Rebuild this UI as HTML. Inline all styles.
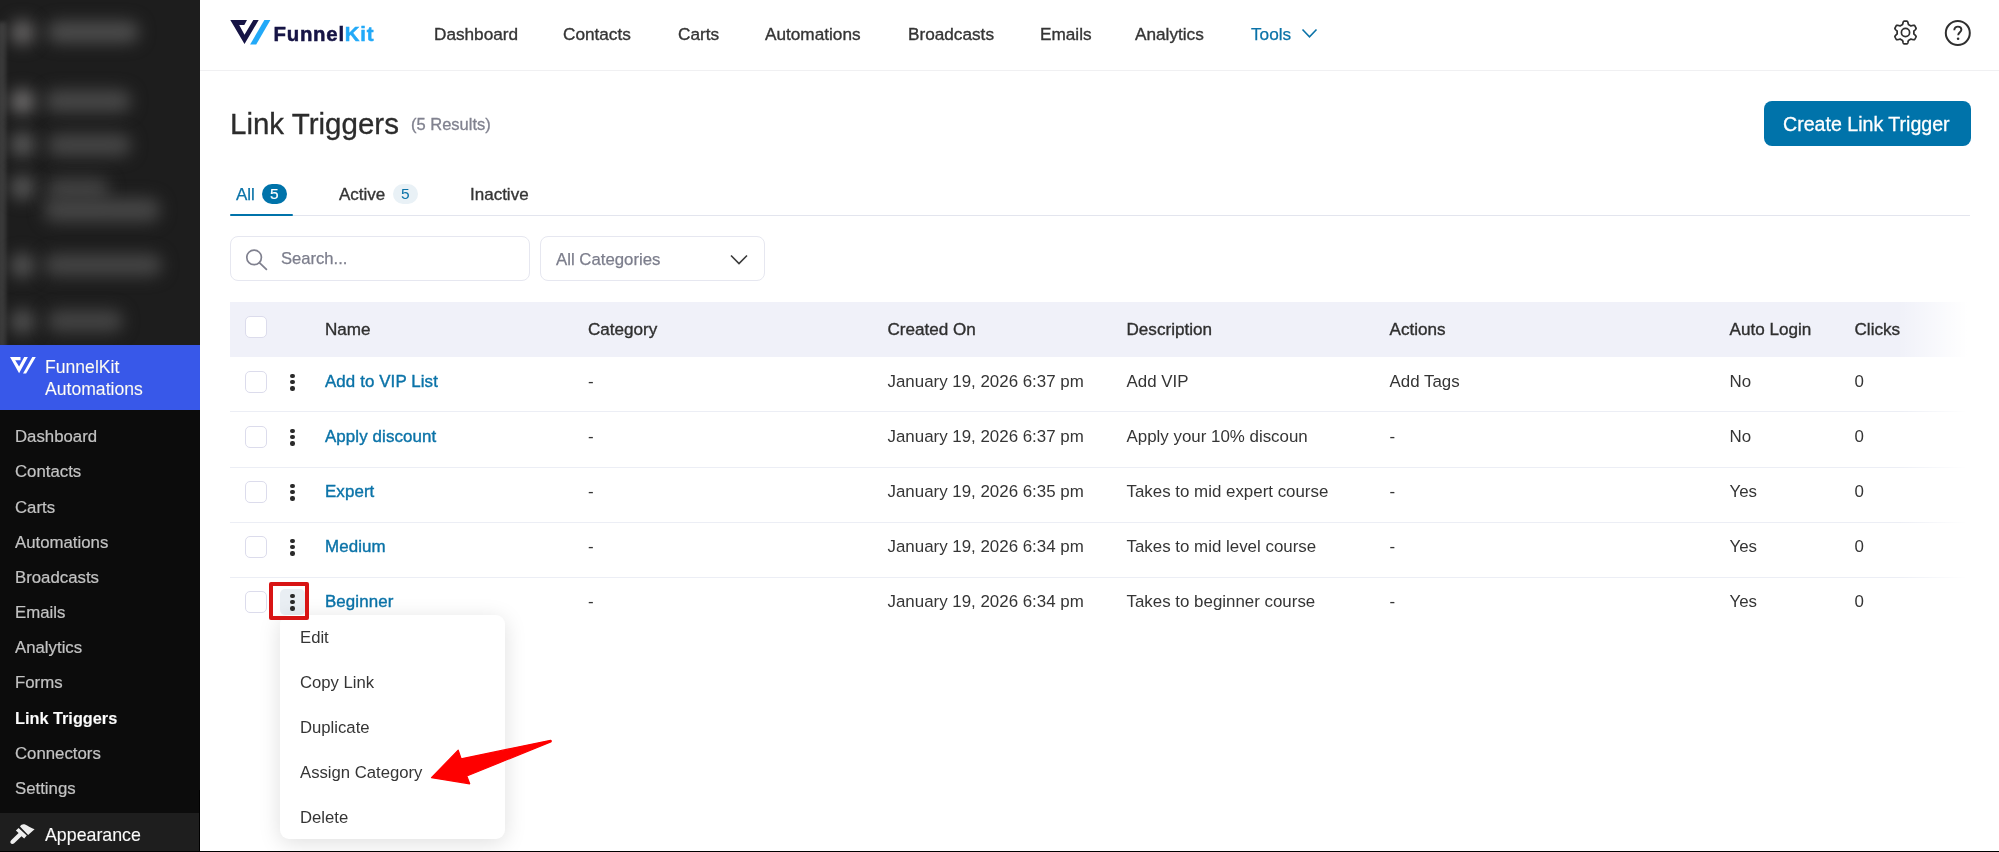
<!DOCTYPE html>
<html><head><meta charset="utf-8">
<style>
*{box-sizing:border-box;margin:0;padding:0}
html,body{width:1999px;height:852px;overflow:hidden;background:#fff}
body{position:relative;font-family:"Liberation Sans",sans-serif;color:#353535}
.a{position:absolute;white-space:nowrap;line-height:1}
#sb{position:absolute;left:0;top:0;width:200px;height:852px;background:#1d1d1d;overflow:hidden}
.blob{position:absolute;background:#555;filter:blur(8px);border-radius:10px}
.sm{position:absolute;left:15px;font-size:16.8px;color:#c3c3c3;line-height:1;-webkit-text-stroke:0.2px #c3c3c3}
.nav{font-size:17.2px;color:#353535;-webkit-text-stroke:0.35px #353535}
.th{font-size:17.1px;color:#2f2f2f;-webkit-text-stroke:0.35px #2f2f2f}
.td{font-size:16.9px;color:#353535}
.lk{font-size:16.9px;letter-spacing:0.1px;color:#0b73a8;-webkit-text-stroke:0.4px #0b73a8}
.cb{position:absolute;left:245px;width:22px;height:22px;border:1.8px solid #dcdcec;border-radius:5px;background:#fff}
.dots{position:absolute;left:290.2px;width:5px}
.dots i{display:block;width:4.4px;height:4.4px;border-radius:50%;background:#2a2a2a;margin-bottom:2px}
.rl{position:absolute;left:230px;width:1740px;height:1px;background:#eceef5}
.mi{font-size:16.7px;color:#353535}
</style></head><body>
<div id="root" style="position:absolute;left:0;top:0;width:1999px;height:852px;will-change:transform;background:#fff">
<div id="sb">
  <div class="blob" style="left:-3px;top:22px;width:9px;height:330px;background:#3a3a3a;filter:blur(2px);border-radius:0"></div>
  <div class="blob" style="left:10px;top:20px;width:25px;height:25px;border-radius:50%;background:#646262"></div>
  <div class="blob" style="left:47px;top:21px;width:92px;height:22px;background:#4c4c4c"></div>
  <div class="blob" style="left:10px;top:89px;width:25px;height:25px;border-radius:50%;background:#6e6c6c"></div>
  <div class="blob" style="left:45px;top:90px;width:86px;height:22px;background:#484848"></div>
  <div class="blob" style="left:10px;top:132px;width:25px;height:25px;border-radius:50%;background:#575757"></div>
  <div class="blob" style="left:47px;top:134px;width:84px;height:22px;background:#464646"></div>
  <div class="blob" style="left:10px;top:175px;width:25px;height:25px;border-radius:50%;background:#555"></div>
  <div class="blob" style="left:47px;top:178px;width:62px;height:22px;background:#424242"></div>
  <div class="blob" style="left:44px;top:198px;width:116px;height:24px;background:#454545"></div>
  <div class="blob" style="left:10px;top:253px;width:25px;height:25px;border-radius:50%;background:#525252"></div>
  <div class="blob" style="left:44px;top:254px;width:118px;height:22px;background:#454545"></div>
  <div class="blob" style="left:10px;top:309px;width:25px;height:25px;border-radius:50%;background:#505050"></div>
  <div class="blob" style="left:47px;top:310px;width:76px;height:22px;background:#444"></div>
<div style="position:absolute;left:0;top:345px;width:200px;height:65px;background:#3858e9"></div>
  <svg style="position:absolute;left:10px;top:357px" width="28" height="18" viewBox="0 0 28 18">
    <path d="M0,0 H10.5 V3.2 H5.2 L9.1,9.5 L14.2,0 H17.9 L9.1,16.2 Z" fill="#fff"/>
    <path d="M22.3,0 H25.8 L16.1,16.5 H13 Z" fill="#fff"/>
  </svg>
  <div class="sm" style="top:359.1px;left:45px;color:#fff;font-size:17.6px">FunnelKit</div>
  <div class="sm" style="top:380.6px;left:45px;color:#fff;font-size:17.6px">Automations</div>
  <div style="position:absolute;left:0;top:410px;width:200px;height:403px;background:#0c0c0c"></div>
  <div class="sm" style="top:428.6px">Dashboard</div>
  <div class="sm" style="top:463.6px">Contacts</div>
  <div class="sm" style="top:499.6px">Carts</div>
  <div class="sm" style="top:535.1px">Automations</div>
  <div class="sm" style="top:570.1px">Broadcasts</div>
  <div class="sm" style="top:605.1px">Emails</div>
  <div class="sm" style="top:640.1px">Analytics</div>
  <div class="sm" style="top:675.1px">Forms</div>
  <div class="sm" style="top:709.8px;color:#fff;font-weight:bold;font-size:16.3px">Link Triggers</div>
  <div class="sm" style="top:745.6px">Connectors</div>
  <div class="sm" style="top:780.6px">Settings</div>
  <div style="position:absolute;left:0;top:813px;width:200px;height:39px;background:#1e1e1e"></div>
  <svg style="position:absolute;left:0;top:813px" width="40" height="39" viewBox="0 813 40 39">
    <path d="M20,826.6 C21,824.8 22.5,824 24.2,824.3 C26.5,824.8 29.5,827.5 34.6,829.2 L28.1,834.9 Z" fill="#eee"/>
    <path d="M15.9,830.4 L18.6,827.9 L26.8,835.6 L24.2,838.4 L21.5,836.2 L14.2,843.2 C13,844.3 11.3,844.2 10.6,843.1 C10,842.1 10.5,840.9 11.4,840.1 L18.6,833.1 Z" fill="#eee"/>
  </svg>
  <div class="sm" style="top:827.1px;left:45px;color:#fff;font-size:17.8px">Appearance</div>
</div>
<!-- header -->
<div style="position:absolute;left:200px;top:70px;width:1799px;height:1px;background:#f0f0f2"></div>
<svg style="position:absolute;left:229px;top:19px" width="44" height="27" viewBox="0 0 44 27">
  <path d="M1.3,0.9 H18 L15.3,5.9 H10.2 L15.5,15.7 L24.3,0.9 H29.7 L15.5,25 Z" fill="#161445"/>
  <path d="M35.4,0.9 H41.4 L27.2,25.6 H21.1 Z" fill="#22a9f8"/>
</svg>
<div class="a" style="left:273.5px;top:24.1px;font-size:20.4px;letter-spacing:0.75px;font-weight:bold;color:#161445;-webkit-text-stroke:0.5px #161445">Funnel<span style="color:#22a9f8;-webkit-text-stroke:0.5px #22a9f8">Kit</span></div>
<div class="a nav" style="left:434px;top:25.6px">Dashboard</div>
<div class="a nav" style="left:563px;top:25.6px">Contacts</div>
<div class="a nav" style="left:678px;top:25.6px">Carts</div>
<div class="a nav" style="left:765px;top:25.6px">Automations</div>
<div class="a nav" style="left:908px;top:25.6px">Broadcasts</div>
<div class="a nav" style="left:1040px;top:25.6px">Emails</div>
<div class="a nav" style="left:1135px;top:25.6px">Analytics</div>
<div class="a nav" style="left:1251px;top:25.6px;color:#0b73a8;-webkit-text-stroke:0.25px #0b73a8">Tools</div>
<svg style="position:absolute;left:1301px;top:28px" width="17" height="11" viewBox="0 0 17 11"><path d="M1.5,1.5 L8.5,8.8 L15.5,1.5" fill="none" stroke="#0b73a8" stroke-width="1.6"/></svg>
<svg style="position:absolute;left:1890px;top:17.4px" width="31" height="31" viewBox="0 0 31 31"><path fill="none" stroke="#2f2f2f" stroke-width="1.7" stroke-linejoin="round" d="M23.90,15.50 L23.90,15.28 L23.89,15.06 L23.87,14.84 L23.85,14.62 L23.83,14.40 L23.80,14.19 L23.96,13.93 L24.32,13.62 L24.69,13.29 L25.06,12.94 L25.42,12.56 L25.75,12.17 L26.05,11.76 L26.14,11.41 L26.03,11.14 L25.91,10.86 L25.79,10.59 L25.66,10.32 L25.52,10.06 L25.37,9.80 L25.22,9.54 L25.06,9.29 L24.90,9.04 L24.72,8.80 L24.54,8.56 L24.36,8.33 L24.01,8.23 L23.51,8.29 L23.00,8.38 L22.50,8.50 L22.01,8.64 L21.54,8.80 L21.09,8.96 L20.79,8.97 L20.61,8.84 L20.44,8.70 L20.26,8.58 L20.07,8.46 L19.89,8.34 L19.70,8.23 L19.51,8.12 L19.31,8.02 L19.12,7.92 L18.92,7.83 L18.71,7.74 L18.51,7.66 L18.37,7.39 L18.29,6.92 L18.19,6.44 L18.06,5.94 L17.92,5.44 L17.74,4.95 L17.54,4.49 L17.28,4.24 L16.99,4.20 L16.69,4.16 L16.39,4.14 L16.10,4.12 L15.80,4.10 L15.50,4.10 L15.20,4.10 L14.90,4.12 L14.61,4.14 L14.31,4.16 L14.01,4.20 L13.72,4.24 L13.46,4.49 L13.26,4.95 L13.08,5.44 L12.94,5.94 L12.81,6.44 L12.71,6.92 L12.63,7.39 L12.49,7.66 L12.29,7.74 L12.08,7.83 L11.88,7.92 L11.69,8.02 L11.49,8.12 L11.30,8.23 L11.11,8.34 L10.93,8.46 L10.74,8.58 L10.56,8.70 L10.39,8.84 L10.21,8.97 L9.91,8.96 L9.46,8.80 L8.99,8.64 L8.50,8.50 L8.00,8.38 L7.49,8.29 L6.99,8.23 L6.64,8.33 L6.46,8.56 L6.28,8.80 L6.10,9.04 L5.94,9.29 L5.78,9.54 L5.63,9.80 L5.48,10.06 L5.34,10.32 L5.21,10.59 L5.09,10.86 L4.97,11.14 L4.86,11.41 L4.95,11.76 L5.25,12.17 L5.58,12.56 L5.94,12.94 L6.31,13.29 L6.68,13.62 L7.04,13.93 L7.20,14.19 L7.17,14.40 L7.15,14.62 L7.13,14.84 L7.11,15.06 L7.10,15.28 L7.10,15.50 L7.10,15.72 L7.11,15.94 L7.13,16.16 L7.15,16.38 L7.17,16.60 L7.20,16.81 L7.04,17.07 L6.68,17.38 L6.31,17.71 L5.94,18.06 L5.58,18.44 L5.25,18.83 L4.95,19.24 L4.86,19.59 L4.97,19.86 L5.09,20.14 L5.21,20.41 L5.34,20.68 L5.48,20.94 L5.63,21.20 L5.78,21.46 L5.94,21.71 L6.10,21.96 L6.28,22.20 L6.46,22.44 L6.64,22.67 L6.99,22.77 L7.49,22.71 L8.00,22.62 L8.50,22.50 L8.99,22.36 L9.46,22.20 L9.91,22.04 L10.21,22.03 L10.39,22.16 L10.56,22.30 L10.74,22.42 L10.93,22.54 L11.11,22.66 L11.30,22.77 L11.49,22.88 L11.69,22.98 L11.88,23.08 L12.08,23.17 L12.29,23.26 L12.49,23.34 L12.63,23.61 L12.71,24.08 L12.81,24.56 L12.94,25.06 L13.08,25.56 L13.26,26.05 L13.46,26.51 L13.72,26.76 L14.01,26.80 L14.31,26.84 L14.61,26.86 L14.90,26.88 L15.20,26.90 L15.50,26.90 L15.80,26.90 L16.10,26.88 L16.39,26.86 L16.69,26.84 L16.99,26.80 L17.28,26.76 L17.54,26.51 L17.74,26.05 L17.92,25.56 L18.06,25.06 L18.19,24.56 L18.29,24.08 L18.37,23.61 L18.51,23.34 L18.71,23.26 L18.92,23.17 L19.12,23.08 L19.31,22.98 L19.51,22.88 L19.70,22.77 L19.89,22.66 L20.07,22.54 L20.26,22.42 L20.44,22.30 L20.61,22.16 L20.79,22.03 L21.09,22.04 L21.54,22.20 L22.01,22.36 L22.50,22.50 L23.00,22.62 L23.51,22.71 L24.01,22.77 L24.36,22.67 L24.54,22.44 L24.72,22.20 L24.90,21.96 L25.06,21.71 L25.22,21.46 L25.37,21.20 L25.52,20.94 L25.66,20.68 L25.79,20.41 L25.91,20.14 L26.03,19.86 L26.14,19.59 L26.05,19.24 L25.75,18.83 L25.42,18.44 L25.06,18.06 L24.69,17.71 L24.32,17.38 L23.96,17.07 L23.80,16.81 L23.83,16.60 L23.85,16.38 L23.87,16.16 L23.89,15.94 L23.90,15.72 Z"/><circle cx="15.5" cy="15.5" r="4.1" fill="none" stroke="#2f2f2f" stroke-width="1.7"/></svg>
<svg style="position:absolute;left:1944px;top:19px" width="28" height="28" viewBox="0 0 28 28"><circle cx="13.8" cy="14" r="12" fill="none" stroke="#2f2f2f" stroke-width="2"/><path d="M10.3,11.2 C10.3,8.9 11.9,7.6 13.9,7.6 C15.9,7.6 17.4,8.9 17.4,10.8 C17.4,13.2 14.2,13.4 14.2,16.2" fill="none" stroke="#2f2f2f" stroke-width="1.9"/><circle cx="14.1" cy="19.7" r="1.3" fill="#2f2f2f"/></svg>

<!-- title -->
<div class="a" style="left:230px;top:109.3px;font-size:29.5px;color:#2c2c2c;-webkit-text-stroke:0.3px #2c2c2c">Link Triggers</div>
<div class="a" style="left:411px;top:116.3px;font-size:16.5px;color:#80828f;-webkit-text-stroke:0.3px #80828f">(5 Results)</div>
<div style="position:absolute;left:1764px;top:101px;width:207px;height:45px;background:#0073aa;border-radius:8px"></div>
<div class="a" style="left:1783px;top:115.2px;font-size:19.6px;color:#fff;-webkit-text-stroke:0.3px #fff">Create Link Trigger</div>

<!-- tabs -->
<div style="position:absolute;left:230px;top:215px;width:1740px;height:1px;background:#e3e5ee"></div>
<div style="position:absolute;left:230px;top:213.6px;width:63px;height:2.6px;background:#0073aa;border-radius:2px"></div>
<div class="a nav" style="left:236px;top:185.7px;font-size:17px;color:#0b73a8;-webkit-text-stroke:0.25px #0b73a8">All</div>
<div style="position:absolute;left:262px;top:184px;width:25px;height:20px;border-radius:10px;background:#0073aa"></div>
<div class="a" style="left:270px;top:186px;font-size:15.5px;color:#fff;-webkit-text-stroke:0.2px #fff">5</div>
<div class="a nav" style="left:339px;top:185.7px;font-size:17px">Active</div>
<div style="position:absolute;left:393px;top:184px;width:25px;height:20px;border-radius:10px;background:#e9f1f6"></div>
<div class="a" style="left:401px;top:186px;font-size:15.5px;color:#0b73a8">5</div>
<div class="a nav" style="left:470px;top:185.7px;font-size:17px">Inactive</div>

<!-- search -->
<div style="position:absolute;left:230px;top:236px;width:300px;height:45px;border:1px solid #e6e7f0;border-radius:8px"></div>
<svg style="position:absolute;left:244px;top:247px" width="25" height="25" viewBox="0 0 25 25"><circle cx="10.1" cy="10.4" r="7.3" fill="none" stroke="#80818f" stroke-width="1.7"/><path d="M15.6,15.9 L22.4,22.3" stroke="#80818f" stroke-width="1.8" stroke-linecap="round"/></svg>
<div class="a" style="left:281px;top:251.4px;font-size:16.6px;color:#7c7e8c;-webkit-text-stroke:0.25px #7c7e8c">Search...</div>
<div style="position:absolute;left:540px;top:236px;width:225px;height:45px;border:1px solid #e6e7f0;border-radius:8px"></div>
<div class="a" style="left:556px;top:252.3px;font-size:16.8px;color:#7c7e8c;-webkit-text-stroke:0.25px #7c7e8c">All Categories</div>
<svg style="position:absolute;left:729px;top:253px" width="20" height="13" viewBox="0 0 20 13"><path d="M2,2.5 L10,10.5 L18,2.5" fill="none" stroke="#3a3a3a" stroke-width="1.6"/></svg>

<!-- table -->
<div style="position:absolute;left:230px;top:302px;width:1740px;height:55px;background:#f0f1f9"></div>
<div class="cb" style="top:316px"></div>
<div class="a th" style="left:325px;top:320.5px">Name</div>
<div class="a th" style="left:588px;top:320.5px">Category</div>
<div class="a th" style="left:887.5px;top:320.5px">Created On</div>
<div class="a th" style="left:1126.5px;top:320.5px">Description</div>
<div class="a th" style="left:1389.5px;top:320.5px">Actions</div>
<div class="a th" style="left:1729.5px;top:320.5px">Auto Login</div>
<div class="a th" style="left:1854.5px;top:320.5px">Clicks</div>
<div class="rl" style="top:411px"></div>
<div class="cb" style="top:371px"></div>
<div class="dots" style="top:373.5px"><i></i><i></i><i></i></div>
<div class="a lk" style="left:325px;top:374.0px">Add to VIP List</div>
<div class="a td" style="left:588px;top:374.4px">-</div>
<div class="a td" style="left:887.5px;top:374.4px">January 19, 2026 6:37 pm</div>
<div class="a td" style="left:1126.5px;top:374.4px">Add VIP</div>
<div class="a td" style="left:1389.5px;top:374.4px">Add Tags</div>
<div class="a td" style="left:1729.5px;top:374.4px">No</div>
<div class="a td" style="left:1854.5px;top:374.4px">0</div>
<div class="rl" style="top:467px"></div>
<div class="cb" style="top:426px"></div>
<div class="dots" style="top:428.5px"><i></i><i></i><i></i></div>
<div class="a lk" style="left:325px;top:429.0px">Apply discount</div>
<div class="a td" style="left:588px;top:429.4px">-</div>
<div class="a td" style="left:887.5px;top:429.4px">January 19, 2026 6:37 pm</div>
<div class="a td" style="left:1126.5px;top:429.4px">Apply your 10% discoun</div>
<div class="a td" style="left:1389.5px;top:429.4px">-</div>
<div class="a td" style="left:1729.5px;top:429.4px">No</div>
<div class="a td" style="left:1854.5px;top:429.4px">0</div>
<div class="rl" style="top:522px"></div>
<div class="cb" style="top:481px"></div>
<div class="dots" style="top:483.5px"><i></i><i></i><i></i></div>
<div class="a lk" style="left:325px;top:484.0px">Expert</div>
<div class="a td" style="left:588px;top:484.4px">-</div>
<div class="a td" style="left:887.5px;top:484.4px">January 19, 2026 6:35 pm</div>
<div class="a td" style="left:1126.5px;top:484.4px">Takes to mid expert course</div>
<div class="a td" style="left:1389.5px;top:484.4px">-</div>
<div class="a td" style="left:1729.5px;top:484.4px">Yes</div>
<div class="a td" style="left:1854.5px;top:484.4px">0</div>
<div class="rl" style="top:577px"></div>
<div class="cb" style="top:536px"></div>
<div class="dots" style="top:538.5px"><i></i><i></i><i></i></div>
<div class="a lk" style="left:325px;top:539.0px">Medium</div>
<div class="a td" style="left:588px;top:539.4px">-</div>
<div class="a td" style="left:887.5px;top:539.4px">January 19, 2026 6:34 pm</div>
<div class="a td" style="left:1126.5px;top:539.4px">Takes to mid level course</div>
<div class="a td" style="left:1389.5px;top:539.4px">-</div>
<div class="a td" style="left:1729.5px;top:539.4px">Yes</div>
<div class="a td" style="left:1854.5px;top:539.4px">0</div>
<div class="cb" style="top:591px"></div>
<div style="position:absolute;left:280px;top:589px;width:25px;height:26px;border-radius:5px;background:#e9eef3"></div>
<div class="dots" style="top:593.5px"><i></i><i></i><i></i></div>
<div class="a lk" style="left:325px;top:594.0px">Beginner</div>
<div class="a td" style="left:588px;top:594.4px">-</div>
<div class="a td" style="left:887.5px;top:594.4px">January 19, 2026 6:34 pm</div>
<div class="a td" style="left:1126.5px;top:594.4px">Takes to beginner course</div>
<div class="a td" style="left:1389.5px;top:594.4px">-</div>
<div class="a td" style="left:1729.5px;top:594.4px">Yes</div>
<div class="a td" style="left:1854.5px;top:594.4px">0</div>
<div style="position:absolute;left:1898px;top:300px;width:75px;height:340px;background:linear-gradient(to right,rgba(255,255,255,0),#fff 92%)"></div>
<div style="position:absolute;left:280px;top:615px;width:225px;height:224px;background:#fff;border-radius:9px;box-shadow:0 4px 22px rgba(0,0,0,0.13)"></div>
<div class="a mi" style="left:300px;top:630.4px">Edit</div>
<div class="a mi" style="left:300px;top:675.1px">Copy Link</div>
<div class="a mi" style="left:300px;top:720.1px">Duplicate</div>
<div class="a mi" style="left:300px;top:764.9px">Assign Category</div>
<div class="a mi" style="left:300px;top:810.2px">Delete</div>
<svg style="position:absolute;left:425px;top:735px" width="132" height="55" viewBox="425 735 132 55"><path d="M550.6,740.3 C551.5,740.6 551.5,741.4 550.8,741.9 L466.8,776 L469.7,783.8 L431.5,777.7 L458.2,750.1 L461.1,758.8 Z" fill="#fe0000" stroke="#fe0000" stroke-width="1.2" stroke-linejoin="round"/></svg>
<div style="position:absolute;left:269px;top:582px;width:40px;height:38px;border:4px solid #d81414;border-radius:2px"></div>
<div style="position:absolute;left:199px;top:790px;width:1px;height:62px;background:#000"></div>
<div style="position:absolute;left:0;top:851px;width:1999px;height:1px;background:#000"></div>
</div>
</body></html>
